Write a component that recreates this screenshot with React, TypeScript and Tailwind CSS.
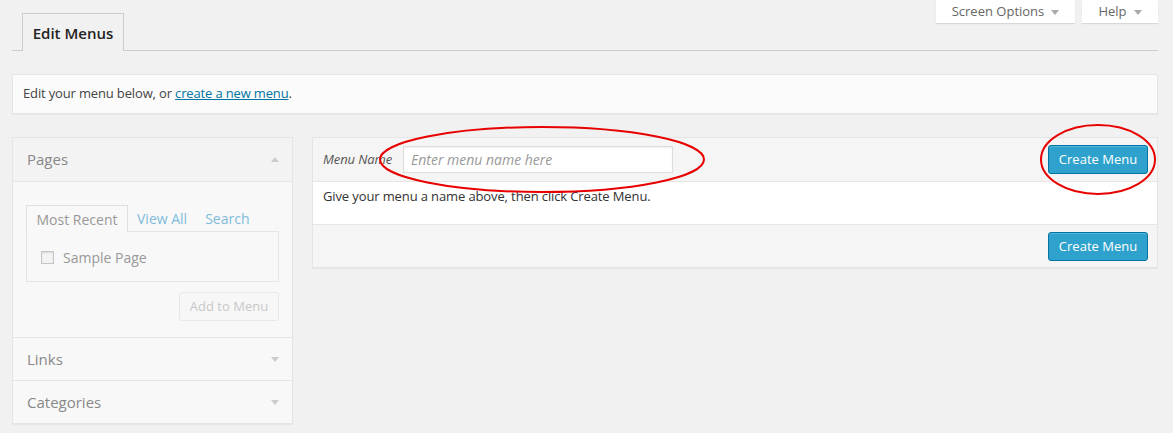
import React from "react";

const Tri = ({ up = false, className = "" }: { up?: boolean; className?: string }) => (
  <svg width="8" height="5" viewBox="0 0 8 5" className={className}>
    {up ? <polygon points="0,5 8,5 4,0" fill="currentColor" /> : <polygon points="0,0 8,0 4,5" fill="currentColor" />}
  </svg>
);

export default function App() {
  return (
    <div
      className="relative w-full min-h-[433px] bg-[#f1f1f1] text-[13px] text-[#444]"
      style={{ fontFamily: '"Open Sans", "Liberation Sans", sans-serif' }}
    >
      <div className="pl-[12px] pr-[15px]">
        {/* top row */}
        <div className="flex justify-between items-start h-[51px] border-b border-[#cccccc]">
          <div className="ml-[10px] mt-[13px] w-[102px] h-[38px] border border-b-0 border-[#cccccc] bg-[#f1f1f1] flex items-center justify-center text-[15px] font-semibold text-[#222]">
            <span className="mt-[1px]">Edit Menus</span>
          </div>
          <div className="flex gap-[7px]">
            <div className="w-[139px] h-[23px] bg-white shadow-[0_1px_1px_rgba(0,0,0,0.1)] flex items-center justify-center gap-[7px] text-[#666]">
              <span>Screen Options</span>
              <Tri className="text-[#aaa] mt-[1px]" />
            </div>
            <div className="w-[76px] h-[23px] bg-white shadow-[0_1px_1px_rgba(0,0,0,0.1)] flex items-center justify-center gap-[7px] text-[#666]">
              <span>Help</span>
              <Tri className="text-[#aaa] mt-[1px]" />
            </div>
          </div>
        </div>

        {/* notice */}
        <div className="mt-[23px] h-[40px] bg-[#fbfbfb] border border-[#e5e5e5] shadow-[0_1px_1px_rgba(0,0,0,0.04)] flex items-center pl-[10px] text-[#444] tracking-[-0.15px]">
          <span>
            Edit your menu below, or{" "}
            <span className="text-[#0074a2] underline">create a new menu</span>.
          </span>
        </div>

        {/* columns */}
        <div className="mt-[23px] flex gap-[19px] items-start">
          {/* left */}
          <div className="w-[281px] border border-[#e5e5e5] bg-[#f8f8f8] shadow-[0_1px_1px_rgba(0,0,0,0.04)]">
            <div className="h-[44px] bg-[#f3f3f3] border-b border-[#e5e5e5] flex items-center justify-between pl-[14px] pr-[13px] text-[15px] text-[#888]">
              <span>Pages</span>
              <Tri up className="text-[#ccc]" />
            </div>
            <div className="pt-[23px] px-[13px] pb-[16px] border-b border-[#e5e5e5]">
              <div className="flex items-end text-[14px]">
                <div className="h-[27px] w-[102px] border border-b-0 border-[#dfdfdf] flex items-center justify-center text-[#999] bg-[#f8f8f8] -mb-px relative">
                  Most Recent
                </div>
                <div className="h-[26px] flex items-center ml-[9px] text-[#7fbcdc]">View All</div>
                <div className="h-[26px] flex items-center ml-[18px] text-[#7fbcdc]">Search</div>
              </div>
              <div className="h-[51px] border border-[#e5e5e5] flex items-center pl-[14px] pt-[2px] gap-[9px] text-[14px] text-[#999]">
                <span className="w-[13px] h-[13px] border border-[#c6c6c6] bg-[#f3f3f3] shadow-[inset_0_1px_2px_rgba(0,0,0,0.1)]" />
                <span>Sample Page</span>
              </div>
              <div className="mt-[10px] flex justify-end">
                <div className="w-[100px] h-[29px] border border-[#e8e8e8] rounded-[3px] bg-[#f7f7f7] flex items-center justify-center text-[#c8c8c8]">
                  Add to Menu
                </div>
              </div>
            </div>
            <div className="h-[43px] border-b border-[#e5e5e5] flex items-center justify-between pl-[14px] pr-[13px] text-[15px] text-[#888]">
              <span>Links</span>
              <Tri className="text-[#ccc]" />
            </div>
            <div className="h-[42px] flex items-center justify-between pl-[14px] pr-[13px] text-[15px] text-[#888]">
              <span>Categories</span>
              <Tri className="text-[#ccc]" />
            </div>
          </div>

          {/* right */}
          <div className="flex-1 border border-[#e5e5e5] shadow-[0_1px_1px_rgba(0,0,0,0.04)]">
            <div className="h-[44px] bg-[#f5f5f5] border-b border-[#e5e5e5] flex items-center justify-between pl-[10px] pr-[9px]">
              <div className="flex items-center">
                <span className="italic text-[#555] w-[80px] tracking-[-0.1px]">Menu Name</span>
                <div className="w-[270px] h-[27px] bg-white border border-[#dddddd] shadow-[inset_0_1px_2px_rgba(0,0,0,0.07)] flex items-center pl-[7px] italic text-[14px] text-[#999]">
                  Enter menu name here
                </div>
              </div>
              <div className="w-[100px] h-[29px] rounded-[3px] bg-[#2ea2cc] border border-[#0074a2] shadow-[inset_0_1px_0_rgba(120,200,230,0.5)] flex items-center justify-center text-white">
                Create Menu
              </div>
            </div>
            <div className="h-[43px] bg-white border-b border-[#e5e5e5] pl-[10px] pt-[5px] text-[#333] tracking-[-0.12px]">
              Give your menu a name above, then click Create Menu.
            </div>
            <div className="h-[42px] bg-[#f5f5f5] flex items-center justify-end pr-[9px]">
              <div className="w-[100px] h-[29px] mt-[1px] rounded-[3px] bg-[#2ea2cc] border border-[#0074a2] shadow-[inset_0_1px_0_rgba(120,200,230,0.5)] flex items-center justify-center text-white">
                Create Menu
              </div>
            </div>
          </div>
        </div>
      </div>

      {/* red annotation ellipses */}
      <svg className="absolute inset-0 pointer-events-none" width="1173" height="433">
        <ellipse cx="542" cy="159.5" rx="162" ry="32.5" fill="none" stroke="#e80000" strokeWidth="2" />
        <ellipse cx="1098" cy="159.5" rx="57" ry="34.5" fill="none" stroke="#e80000" strokeWidth="2" />
      </svg>
    </div>
  );
}
